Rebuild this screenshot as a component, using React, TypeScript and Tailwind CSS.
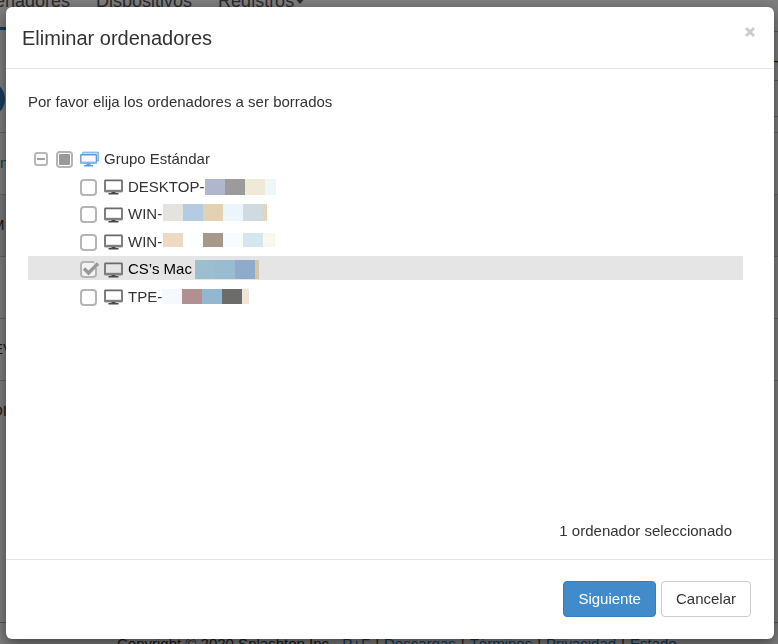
import { useState } from "react";

interface Computer {
  id: string;
  name: string;
  // width and fill of each block that hides the rest of the name
  mask: string[];
  maskClass: string;
}

const COMPUTERS: Computer[] = [
  {
    id: "desktop",
    name: "DESKTOP-",
    maskClass: "ml-px h-4",
    mask: ["w-5 bg-[#b0b6cc]", "w-5 bg-[#9b9b9b]", "w-5 bg-[#f1e9d8]", "w-[11px] bg-[#edf6f9]"],
  },
  {
    id: "win-1",
    name: "WIN-",
    maskClass: "ml-px h-[17px] mb-[5px]",
    mask: [
      "w-5 bg-[#e5e3dd]",
      "w-5 bg-[#b3cce1]",
      "w-5 bg-[#e3d2b2]",
      "w-5 bg-[#ecf4fc]",
      "w-5 bg-[#cfdae1]",
      "w-1 bg-[#e9d3b2]",
    ],
  },
  {
    id: "win-2",
    name: "WIN-",
    maskClass: "ml-px h-3.5 mb-1",
    mask: [
      "w-5 bg-[#eed9c2]",
      "w-5",
      "w-5 bg-[#a6988a]",
      "w-5 bg-[#f6fcfe]",
      "w-5 bg-[#d4e6ee]",
      "w-3 bg-[#fbf7ec]",
    ],
  },
  {
    id: "mac",
    name: "CS’s Mac",
    maskClass: "ml-[3px] h-[19px]",
    mask: ["w-5 bg-[#9cbfd0]", "w-5 bg-[#99bcd0]", "w-5 bg-[#90aaca]", "w-1 bg-[#d3c7a5]"],
  },
  {
    id: "tpe",
    name: "TPE-",
    maskClass: "h-[15px] mb-0.5",
    mask: [
      "w-5 bg-[#f5f9fb]",
      "w-5 bg-[#b38f8f]",
      "w-5 bg-[#94b7d1]",
      "w-5 bg-[#6c6c6b]",
      "w-[7px] bg-[#f0e5d4]",
    ],
  },
];

function MonitorIcon() {
  return (
    <svg className="h-4 w-[19px] shrink-0" viewBox="0 0 19 16" fill="none" aria-hidden="true">
      <rect x="1" y="1.3" width="17" height="11" rx="0.5" stroke="#6a6a6a" strokeWidth="1.7" />
      <path d="M0.3 12H18.7" stroke="#808080" strokeWidth="2.4" />
      <path d="M7.5 13H11.5V14H14.5V15.6H4.5V14H7.5Z" fill="#484848" />
    </svg>
  );
}

function GroupIcon() {
  return (
    <svg className="h-4 w-[19px] shrink-0" viewBox="0 0 19 16" fill="none" aria-hidden="true">
      <path d="M2.8 4V1.2H18.3V10H16.5V4Z" fill="#c3def4" stroke="#6ea8dc" />
      <rect x="0.8" y="3.7" width="15.6" height="8" rx="0.5" fill="#f4faff" stroke="#5b9bd5" strokeWidth="1.4" />
      <path d="M0.3 11.7H16.8" stroke="#86b8e6" strokeWidth="2.2" />
      <path d="M6.5 12.5H10.5V14H13V15.5H4.2V14H6.5Z" fill="#5b9bd5" />
    </svg>
  );
}

function CheckBox({
  id,
  checked,
  mixed,
  onChange,
}: {
  id: string;
  checked: boolean;
  mixed?: boolean;
  onChange: () => void;
}) {
  return (
    <span className="relative flex size-[17px] shrink-0">
      <input
        id={id}
        type="checkbox"
        checked={checked}
        onChange={onChange}
        ref={(el) => {
          if (el) el.indeterminate = !!mixed;
        }}
        className="size-[17px] appearance-none rounded border-2 border-[#b5b5b5] bg-white checked:bg-[#f2f2f2]"
      />
      {mixed && <span className="pointer-events-none absolute inset-[3px] rounded-[1px] bg-[#999]" />}
      {checked && !mixed && (
        <svg className="pointer-events-none absolute top-0 left-0 h-[17px] w-5" viewBox="0 0 20 17" fill="none">
          <path d="M14 0H19V7H15Z" fill="#e5e5e5" />
          <path d="M4 7.5L8.5 12L18 2.5" stroke="#999" strokeWidth="3.4" />
        </svg>
      )}
    </span>
  );
}

function PageBehind() {
  return (
    <div
      className="fixed inset-0 flex flex-col overflow-hidden bg-white text-[15px] text-[#333]"
      aria-hidden="true"
    >
      <div className="-mt-[13px] -ml-[35px] flex h-10 shrink-0 gap-[26px] text-lg leading-7 text-[#555]">
        <span>Ordenadores</span>
        <span>Dispositivos</span>
        <span className="flex">
          Registros
          <svg className="mt-2.5 h-2 w-3" viewBox="0 0 12 8">
            <path d="M0 0H12L6 7Z" fill="#555" />
          </svg>
        </span>
      </div>
      <div className="flex h-[106px] shrink-0 justify-between border-b border-[#ccc]">
        <div className="w-10 border-t-3 border-[#1b75bb] pt-[51px]">
          <div className="-ml-[31px] size-9 rounded-full bg-[#337ab7]" />
        </div>
        <div className="w-2 pt-1">
          <div className="h-[50px] border-y border-[#bbb] pt-5 leading-5 text-[#531]">H</div>
          <div className="h-9 border-b border-[#bbb]" />
        </div>
      </div>
      <div className="flex h-[62px] shrink-0 items-center border-b border-[#ccc] text-[#1b75bb]">n</div>
      <div className="flex h-[62px] shrink-0 items-center border-b border-[#ccc] bg-[#f0f0f0]">
        <span className="-ml-2">M</span>
      </div>
      <div className="h-[62px] shrink-0 border-b border-[#ccc]" />
      <div className="flex h-[62px] shrink-0 items-center border-b border-[#ccc]">
        <span className="-ml-[7px]">EV</span>
      </div>
      <div className="flex h-[60px] shrink-0 items-center">
        <span className="-ml-2">DI</span>
      </div>
      <div className="flex-1" />
      <div className="-mb-[11px] flex h-[33px] shrink-0 items-end gap-[5px] border-t border-[#aaa] pl-[117px] whitespace-nowrap">
        <span className="pr-1">Copyright © 2020 Splashtop Inc.</span>
        <span className="text-[#1b75bb]">P+F</span>|<span className="text-[#1b75bb]">Descargas</span>|
        <span className="text-[#1b75bb]">Términos</span>|<span className="text-[#1b75bb]">Privacidad</span>|
        <span className="text-[#1b75bb]">Estado</span>
      </div>
    </div>
  );
}

export default function App() {
  const [selected, setSelected] = useState<string[]>(["mac"]);
  const [open, setOpen] = useState(true);

  const toggle = (id: string) =>
    setSelected((prev) => (prev.includes(id) ? prev.filter((s) => s !== id) : [...prev, id]));

  const all = selected.length === COMPUTERS.length;

  return (
    <div className="font-['Liberation_Sans',Arial,sans-serif]">
      <PageBehind />
      <div className="relative flex min-h-screen bg-black/50 px-1.5 pt-[7px] pr-1 pb-[5px]">
        <div
          role="dialog"
          aria-labelledby="dialog-title"
          className="flex flex-1 flex-col rounded-md bg-white text-[15px] text-[#333] shadow-[0_5px_15px_rgba(0,0,0,0.5)]"
        >
          <div className="flex h-[62px] items-center justify-between border-b border-[#e5e5e5] px-4">
            <h1 id="dialog-title" className="text-xl">
              Eliminar ordenadores
            </h1>
            <button type="button" aria-label="Cerrar" className="mb-3 p-0.5">
              <svg className="size-3" viewBox="0 0 12 12">
                <path d="M2 2L10 10M10 2L2 10" stroke="#ccc" strokeWidth="3" />
              </svg>
            </button>
          </div>

          <div className="flex flex-1 flex-col px-[22px] pt-[21px] pb-4">
            <p className="leading-6">Por favor elija los ordenadores a ser borrados</p>

            <div className="mt-[33px] mr-[9px] flex-1">
              <div className="flex h-6 items-center pl-1.5">
                <button
                  type="button"
                  aria-label="Contraer grupo"
                  aria-expanded={open}
                  onClick={() => setOpen(!open)}
                  className="flex size-3.5 items-center justify-center rounded-[3px] border-2 border-[#b8b8b8]"
                >
                  <span className="h-0.5 w-2 bg-[#a0a0a0]" />
                </button>
                <span className="ml-2 flex">
                  <CheckBox
                    id="group"
                    checked={all}
                    mixed={selected.length > 0 && !all}
                    onChange={() => setSelected(all ? [] : COMPUTERS.map((c) => c.id))}
                  />
                </span>
                <label htmlFor="group" className="ml-[7px] flex items-center gap-[5px]">
                  <GroupIcon />
                  Grupo Estándar
                </label>
              </div>

              {open && (
                <ul className="mt-0.5 flex h-[134px] flex-col justify-between">
                  {COMPUTERS.map((c) => (
                    <li
                      key={c.id}
                      className={`flex h-6 items-center pt-1 pl-[52px] ${
                        selected.includes(c.id) ? "bg-[#e5e5e5] text-black" : ""
                      }`}
                    >
                      <CheckBox id={c.id} checked={selected.includes(c.id)} onChange={() => toggle(c.id)} />
                      <label htmlFor={c.id} className="ml-[7px] flex items-center">
                        <MonitorIcon />
                        <span className="ml-[5px]">{c.name}</span>
                        <span className={`flex ${c.maskClass}`}>
                          {c.mask.map((m, i) => (
                            <span key={i} className={m} />
                          ))}
                        </span>
                      </label>
                    </li>
                  ))}
                </ul>
              )}
            </div>

            <p className="pr-5 text-right leading-6">{selected.length} ordenador seleccionado</p>
          </div>

          <div className="flex h-20 items-center justify-end gap-[5px] border-t border-[#e5e5e5] pr-[23px] pb-0.5">
            <button
              type="button"
              className="h-9 rounded border border-[#357ebd] bg-[#428bca] px-3.5 pt-0.5 text-white"
            >
              Siguiente
            </button>
            <button type="button" className="h-9 rounded border border-[#ccc] bg-white px-3.5 pt-0.5">
              Cancelar
            </button>
          </div>
        </div>
      </div>
    </div>
  );
}
